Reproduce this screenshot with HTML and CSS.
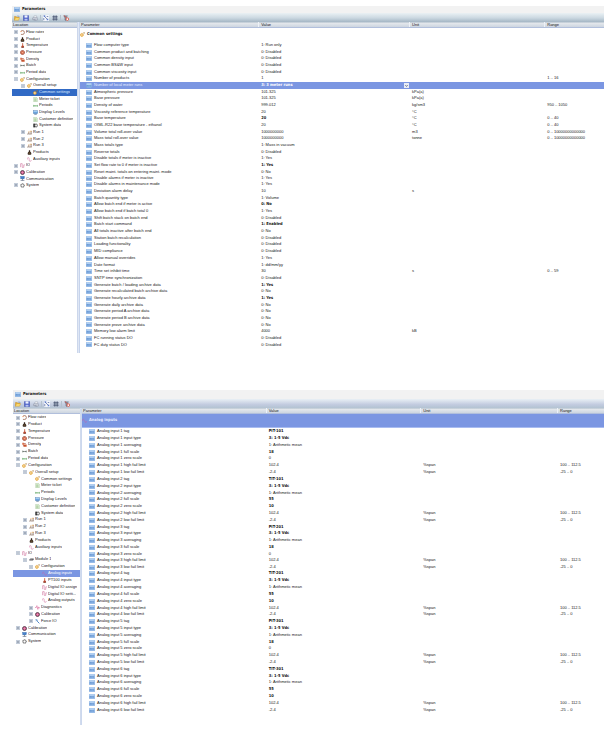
FILE: index.html
```html
<!DOCTYPE html>
<html lang="en">
<head>
<meta charset="utf-8">
<title>Parameters</title>
<link rel="stylesheet" href="styles.css">
</head>
<body>
<svg class="sprite" aria-hidden="true">
  <symbol id="i-param" viewBox="0 0 18 15"><rect x=".7" y=".7" width="16.6" height="13.6" rx="1" fill="#9cc2ee" stroke="#5f93d3" stroke-width="1.4"/><rect x="1.5" y="1.5" width="15" height="3" fill="#c9e0f8"/><path d="M3 11V7h2v4M8 11V7h2v4M12 7h3M12 10h3" stroke="#3f73bb" fill="none" stroke-width="1.2"/></symbol>
  <symbol id="i-open" viewBox="0 0 16 16"><path d="M1 14V4h5l2 2h5v3" fill="#e9b23a" stroke="#b78325"/><path d="M1 14l3-7h11l-3 7z" fill="#fbdc72" stroke="#c79024"/><path d="M9 3q3-2 5 2" fill="none" stroke="#3d6ab5" stroke-width="1.4"/></symbol>
  <symbol id="i-save" viewBox="0 0 16 16"><rect x="1" y="1" width="14" height="14" rx="1" fill="#4a5fc9" stroke="#2e3fa0"/><rect x="4" y="1" width="8" height="6" fill="#eef2ff"/><rect x="4" y="10" width="8" height="5" fill="#b9c4ee"/></symbol>
  <symbol id="i-print" viewBox="0 0 16 16"><path d="M4 7l2-5h6l1 5" fill="#fff" stroke="#8791a5"/><path d="M1 8l4-2h8l2 3v4l-5 2-9-3z" fill="#c4cad6" stroke="#7d8699"/><path d="M4 12l6 1" stroke="#56617a"/></symbol>
  <symbol id="i-tree" viewBox="0 0 16 16"><path fill="#f3f6fb" d="M0 0h16v16H0z"/><path d="M2 2l3 3 3 3 5 5M2 8v6M10 4h4" stroke="#354a8c" stroke-width="1.6" fill="none"/><rect x="2" y="1" width="4" height="4" fill="#5878c9"/><rect x="10" y="10" width="4" height="4" fill="#5878c9"/></symbol>
  <symbol id="i-grid" viewBox="0 0 16 16"><path d="M2 2h12v12H2z" fill="#c4cddd"/><path d="M1 4h14M1 8h14M1 12h14M4 1v14M8 1v14M12 1v14" stroke="#3c4965" stroke-width="1.4"/></symbol>
  <symbol id="i-filter" viewBox="0 0 16 16"><path d="M2 2h10L8 8v7l-3-2V8z" fill="#8e99ab" stroke="#596273"/><path d="M2 1l8 7" stroke="#d6402b" stroke-width="2"/><circle cx="11.500" cy="11" r="3.500" fill="#fff" stroke="#d6402b" stroke-width="2"/></symbol>
  <symbol id="i-flow" viewBox="0 0 16 16"><path d="M4 2h5q5 0 5 6t-5 6H3" fill="none" stroke="#9b6751" stroke-width="2.500"/><path d="M1 5h5" stroke="#e67a35" stroke-width="2"/></symbol>
  <symbol id="i-drop" viewBox="0 0 16 16"><path d="M6 1h4v4q4 3 4 7 0 3-3 3H5q-3 0-3-3 0-4 4-7z" fill="#33241c"/><path d="M5 10h6" stroke="#aa8b4c" stroke-width="2"/></symbol>
  <symbol id="i-temp" viewBox="0 0 16 16"><path d="M7 1h3v7q3 1 3 4 0 3-4.500 3T4 12q0-3 3-4z" fill="#bd4a32"/><path d="M8.500 2v6" stroke="#eec8b6"/><path d="M4 14h9" stroke="#6b3a2b" stroke-width="2"/></symbol>
  <symbol id="i-press" viewBox="0 0 16 16"><circle cx="8" cy="8" r="6.500" fill="#d8694a" stroke="#8d3929" stroke-width="2"/><path d="M4 5l8 6M12 4l-6 7" stroke="#f5cbb5" stroke-width="1.500"/></symbol>
  <symbol id="i-dens" viewBox="0 0 16 16"><path d="M1 2h5v6h9v7H5V9H1z" fill="#d9663d"/><path d="M6 5h6M3 12h9" stroke="#a13c24" stroke-width="2"/></symbol>
  <symbol id="i-batch" viewBox="0 0 16 16"><path d="M1 5v6M15 5v6M2 8h12M5 6v4M11 6v4" stroke="#58605a" stroke-width="1.800"/></symbol>
  <symbol id="i-period" viewBox="0 0 16 16"><path d="M0 9h16M1 6v6M5 7v4M9 7v4M14 6v6" stroke="#62a864" stroke-width="1.800"/></symbol>
  <symbol id="i-gears" viewBox="0 0 16 16"><circle cx="6" cy="9.500" r="4" fill="#fff3cf" stroke="#e09b27" stroke-width="2.600" /><circle cx="6" cy="9.500" r="5.600" fill="none" stroke="#e09b27" stroke-width="1.400" stroke-dasharray="2 2"/><circle cx="13" cy="3" r="1.700" fill="none" stroke="#a77a35" stroke-width="1.600"/></symbol>
  <symbol id="i-ticket" viewBox="0 0 16 16"><path d="M2 1h9l3 3v11H2z" fill="#e6f4df" stroke="#83ac75"/><path d="M4 6h7M4 9h7M4 12h7" stroke="#76ad66" stroke-width="1.400"/></symbol>
  <symbol id="i-display" viewBox="0 0 16 16"><rect x="1" y="2" width="14" height="10" fill="#6ba4df" stroke="#426d9f"/><path d="M2 3h12v3H2z" fill="#a9d1f5"/><path d="M4 14h8" stroke="#46678f" stroke-width="2"/></symbol>
  <symbol id="i-system" viewBox="0 0 16 16"><path d="M1 2h6v12H1z" fill="#292929"/><circle cx="10" cy="8" r="4.500" fill="#fff" stroke="#333" stroke-width="2"/><path d="M10 1v14M3 5h2M3 9h2" stroke="#777"/></symbol>
  <symbol id="i-run" viewBox="0 0 16 16"><path d="M0 13h5V7M6 13h4V5M10 13h5V3" fill="none" stroke="#70503f" stroke-width="1.600"/><path d="M4 6h3M9 4h6" stroke="#e19536" stroke-width="2"/></symbol>
  <symbol id="i-wave" viewBox="0 0 16 16"><path d="M1 8V5q0-3 3-3t3 3v5q0 4 3 4t4-4" fill="none" stroke="#d477a5" stroke-width="1.800"/></symbol>
  <symbol id="i-square" viewBox="0 0 16 16"><path d="M0 12h2V2h5v12h5V6h4" fill="none" stroke="#cf6c9a" stroke-width="1.800"/></symbol>
  <symbol id="i-sine" viewBox="0 0 16 16"><path d="M1 9q3-11 7 0t7 1" fill="none" stroke="#c964a4" stroke-width="1.600"/></symbol>
  <symbol id="i-cal" viewBox="0 0 16 16"><circle cx="8" cy="8" r="6.300" fill="#d75d91" stroke="#453840" stroke-width="2.600"/><path d="M5 8h6M8 5v6" stroke="#f1a6c4" stroke-width="1.500"/></symbol>
  <symbol id="i-comm" viewBox="0 0 16 16"><rect x="2" y="1" width="12" height="8" fill="#3c7cca" stroke="#2d5d9c"/><path d="M8 9v5M2 14h12" stroke="#4b5a75" stroke-width="2"/><path d="M4 3h6" stroke="#9fc7ef"/></symbol>
  <symbol id="i-gear" viewBox="0 0 16 16"><circle cx="8" cy="8" r="4.600" fill="#fff" stroke="#4e4e4e" stroke-width="2"/><circle cx="8" cy="8" r="6.400" fill="none" stroke="#4e4e4e" stroke-width="2" stroke-dasharray="2.500 2.500"/></symbol>
  <symbol id="i-module" viewBox="0 0 16 16"><path d="M1 8l4-3h10v4l-3 2H1z" fill="#56565a"/><path d="M2 8h9" stroke="#c7c7ca"/></symbol>
  <symbol id="i-diag" viewBox="0 0 16 16"><path d="M0 8h4l2-6 3 12 2-8 1 3h4" fill="none" stroke="#dc6f9e" stroke-width="2"/></symbol>
  <symbol id="i-force" viewBox="0 0 16 16"><path d="M2 2l4 1 1 4 7 7" fill="none" stroke="#447fc1" stroke-width="3"/><path d="M2 7l5-5" stroke="#78a9db" stroke-width="2"/></symbol>
</svg>

<main>
  <section class="panel common" id="common" aria-label="Common settings parameters"></section>
  <section class="panel analog" id="analog" aria-label="Analog input parameters"></section>
</main>
<script src="app.js"></script>
</body>
</html>
```
FILE: styles.css
```css
* { box-sizing: border-box; }

body {
  margin: 0;
  background: #fff;
  color: #161616;
  font: 4px "Liberation Sans", Arial, sans-serif;
}

button, select {
  margin: 0;
  padding: 0;
  border: 0;
  background: none;
  color: inherit;
  font: inherit;
  line-height: inherit;
}

.sprite { position: absolute; width: 0; height: 0; }

main {
  display: flex;
  flex-direction: column;
  gap: 37px;
  padding: 6px 0 23px 12px;
}

.panel { line-height: 1.67; }
.analog { line-height: 1.705; margin-left: 1px; }

.icon { flex: none; width: 5px; height: 5px; }
.icon.param { width: 6px; }

.titlebar {
  display: flex;
  align-items: center;
  gap: 2px;
  height: 7px;
  margin: 0;
  padding-left: 2px;
  background: #f2f2f2;
}
.analog .titlebar { height: 9px; }

.titlebar, .bold, .section, .editor {
  font-family: "DejaVu Sans Condensed", "DejaVu Sans", sans-serif;
  font-size: 4px;
  font-weight: bold;
}

.toolbar {
  display: flex;
  align-items: center;
  gap: 3px;
  height: 9px;
  padding-left: 2px;
  background: linear-gradient(#eaf1f4, #cbd8e1 55%, #a4b6c4);
}
.analog .toolbar { background: linear-gradient(#e9f0f5, #c3cce0 60%, #b3c3d2); }
.toolbar button { display: flex; }
.toolbar .icon { width: 6px; height: 6px; }
.toolbar .rule { width: 1px; height: 6px; margin: 0 -1px; background: #b4c1cd; }

.split {
  display: grid;
  grid-template-columns: 65px 3px 1fr;
}
.analog .split { grid-template-columns: 67px 2px 1fr; }

.head {
  height: 6px;
  border-bottom: 1px solid #b1bfdc;
  background: linear-gradient(#b9c6d1, #e2e6eb 30%, #ccd5e0);
  line-height: 5px;
}
.location { padding-left: 1px; }
.bar { background: linear-gradient(90deg, #c3cfe6, #dfe7f5 50%, #b9c9e6); }

.tree, .tree ul { margin: 0; padding: 0; list-style: none; }
.tree { padding-top: 1px; overflow: hidden; }
.analog .tree { padding-top: 0; }

.node {
  display: flex;
  align-items: center;
  gap: 2px;
  padding-left: 2px;
  white-space: nowrap;
}
.node .label { overflow: hidden; text-overflow: ellipsis; margin-left: -1px; }
.tree ul .node { padding-left: 9px; }
.tree ul ul .node { padding-left: 15px; }
.analog .node { padding-left: 3px; }
.analog .tree ul .node { padding-left: 10px; }
.analog .tree ul ul .node { padding-left: 16px; }
.analog .tree ul ul ul .node { padding-left: 23px; }

.expander, .blank { flex: none; width: 4px; height: 4px; }
.expander {
  display: flex;
  border: 1px solid #c3ccd9;
  background: #e9eef5;
}
.expander svg { width: 4px; height: 4px; margin: -1px; flex: none; }
.common .node.selected { background: #316ac5; color: #dce9ff; }
.analog .node.selected { background: #7b96e2; color: #fff; }

table, thead, tbody { display: block; }
tr {
  display: grid;
  grid-template-columns: 340fr 288fr 258fr 114fr;
}
.analog tr { grid-template-columns: 352fr 296fr 262fr 90fr; }
th, td { padding: 0 0 0 3px; text-align: left; font-weight: normal; white-space: nowrap; }
th:first-child { padding-left: 1px; }
th + th { border-left: 1px solid #eef2f7; padding-left: 2px; }
td:first-child { display: flex; align-items: center; gap: 2px; padding-left: 6px; }
.analog td:first-child { padding-left: 7px; }
td.bold { font-weight: bold; }
tr.selected { background: #7b96e2; color: #e7edff; }
tr.section { display: block; height: 14px; }
.panel tr.section td {
  display: flex;
  align-items: center;
  gap: 2px;
  height: 13px;
  padding-left: 0;
  font-weight: bold;
}
.analog tr.section { border-bottom: 1px solid #a9bcf0; }

.seam { height: 6px; }
.common .seam .label { height: 4px; overflow: hidden; align-self: flex-start; }
.common td.seam-value { height: 4px; overflow: hidden; }

.editing { display: flex; }
.editor { flex: 1; min-width: 0; height: 6px; appearance: none; color: #fff; line-height: 6px; }
.drop { flex: none; width: 5px; height: 5px; margin: 1px 0 0; align-self: flex-start; }

.params { padding-bottom: 5px; }
.analog .params { padding-bottom: 11px; }
```
FILE: app.js
```js
const icon = (name, cls = '') => `<svg class="icon ${cls}" aria-hidden="true"><use href="#i-${name}"/></svg>`;

// Tree nodes: [label, icon, state, children]; state is '+', '-' or ''.
const measured = [
  ['Flow rates', 'flow', '+'], ['Product', 'drop', '+'], ['Temperature', 'temp', '+'],
  ['Pressure', 'press', '+'], ['Density', 'dens', '+'], ['Batch', 'batch', '+'], ['Period data', 'period', '+']
];
const setup = ['Overall setup', 'gears', '-', [
  ['Common settings', 'gears', ''], ['Meter ticket', 'ticket', ''], ['Periods', 'period', ''],
  ['Display Levels', 'display', ''], ['Customer definition', 'ticket', ''], ['System data', 'system', '']
]];
const configuration = ['Configuration', 'gears', '-', [
  setup, ['Run 1', 'run', '+'], ['Run 2', 'run', '+'], ['Run 3', 'run', '+'],
  ['Products', 'drop', ''], ['Auxiliary inputs', 'wave', '']
]];
const tail = [['Calibration', 'cal', '+'], ['Communication', 'comm', ''], ['System', 'gear', '+']];
const io = ['IO', 'square', '-', [
  ['Module 1', 'module', '-', [
    ['Configuration', 'gears', '-', [
      ['Analog inputs', 'sine', ''], ['PT100 inputs', 'temp', ''], ['Digital IO assign', 'square', ''],
      ['Digital IO setti...', 'square', ''], ['Analog outputs', 'wave', '']
    ]],
    ['Diagnostics', 'diag', '+'], ['Calibration', 'cal', '+'], ['Force IO', 'force', '+']
  ]]
]];

function treeItems(nodes, selected, seam) {
  return nodes.map(([label, name, state, children]) => {
    const toggle = state
      ? `<button class="expander" type="button" aria-label="Toggle ${label}"><svg viewBox="0 0 8 8"><path d="M2 4h4${state === '+' ? 'M4 2v4' : ''}" stroke="#44546c"/></svg></button>`
      : '<span class="blank"></span>';
    const cls = (label === selected ? ' selected' : '') + (label === seam ? ' seam' : '');
    return `<li><div class="node${cls}">${toggle}${icon(name)}<span class="label">${label}</span></div>` +
      (children ? `<ul>${treeItems(children, selected, seam)}</ul>` : '') + '</li>';
  }).join('');
}

// Rows: name | value | unit | range; a leading * marks a changed value.
const commonRows = `Flow computer type|1: Run only
Common product and batching|0: Disabled
Common density input|0: Disabled
Common BS&amp;W input|0: Disabled
Common viscosity input|0: Disabled
Number of products|1||1 .. 16
Number of local meter runs|3: 3 meter runs
Atmospheric pressure|101.325|kPa(a)
Base pressure|101.325|kPa(a)
Density of water|999.012|kg/sm3|950 .. 1050
Viscosity reference temperature|20|°C
Base temperature|*20|°C|0 .. 40
OIML-R22 base temperature - ethanol|20|°C|0 .. 40
Volume total roll-over value|1000000000|m3|0 .. 10000000000000
Mass total roll-over value|1000000000|tonne|0 .. 10000000000000
Mass totals type|1: Mass in vacuum
Reverse totals|0: Disabled
Disable totals if meter is inactive|1: Yes
Set flow rate to 0 if meter is inactive|*1: Yes
Reset maint. totals on entering maint. mode|0: No
Disable alarms if meter is inactive|1: Yes
Disable alarms in maintenance mode|1: Yes
Deviation alarm delay|10|s
Batch quantity type|1: Volume
Allow batch end if meter is active|*0: No
Allow batch end if batch total 0|1: Yes
Shift batch stack on batch end|0: Disabled
Batch start command|*1: Enabled
All totals inactive after batch end|0: No
Station batch recalculation|0: Disabled
Loading functionality|0: Disabled
MID compliance|0: Disabled
Allow manual overrides|1: Yes
Date format|1: dd/mm/yy
Time set inhibit time|30|s|0 .. 59
SNTP time synchronization|0: Disabled
Generate batch / loading archive data|*1: Yes
Generate recalculated batch archive data|0: No
Generate hourly archive data|*1: Yes
Generate daily archive data|0: No
Generate period A archive data|0: No
Generate period B archive data|0: No
Generate prove archive data|0: No
Memory low alarm limit|4000|kB
FC running status DO|0: Disabled
FC duty status DO|0: Disabled`.split('\n').map(line => line.split('|'));

const tags = ['PIT-101', 'TIT-101', 'PIT-201', 'TIT-201', 'PIT-301', 'TIT-301'];
const analogRows = tags.flatMap((tag, i) => {
  const name = `Analog input ${i + 1} `;
  const temperature = i % 2 === 1;
  return [
    [name + 'tag', '*' + tag],
    [name + 'input type', '*3: 1-5 Vdc'],
    [name + 'averaging', '1: Arithmetic mean'],
    [name + 'full scale', temperature ? '*55' : '*18'],
    [name + 'zero scale', temperature ? '*10' : '0'],
    [name + 'high fail limit', '102.4', '%span', '100 .. 112.5'],
    [name + 'low fail limit', '-2.4', '%span', '-25 .. 0']
  ];
});

function tableRow([name, value, unit = '', range = ''], selected, seam) {
  const bold = value.startsWith('*');
  const text = value.replace('*', '');
  const isSelected = name === selected;
  const isSeam = name === seam;
  const cell = isSelected
    ? `<td class="editing"><select class="editor" aria-label="${name}"><option>${text}</option></select><svg class="drop" viewBox="0 0 10 10" aria-hidden="true"><rect width="10" height="10" fill="#e9edf5"/><path d="M2.500 4L5 7l2.500-3" fill="none" stroke="#5b6680" stroke-width="1.500"/></svg></td>`
    : `<td class="${bold ? 'bold' : ''}${isSeam ? ' seam-value' : ''}">${text}</td>`;
  return `<tr class="${isSelected ? 'selected' : ''}${isSeam ? ' seam' : ''}"><td>${icon('param', 'param')}<span class="label">${name}</span></td>${cell}<td>${unit}</td><td>${range}</td></tr>`;
}

function renderPanel(id, o) {
  const rule = '<span class="rule"></span>';
  const tool = (name, label) => `<button type="button" aria-label="${label}">${icon(name)}</button>`;
  document.getElementById(id).innerHTML = `
    <h1 class="titlebar">${icon('param', 'param')}Parameters</h1>
    <div class="toolbar">${tool('open', 'Open')}${tool('save', 'Save')}${tool('print', 'Print')}${rule}${tool('tree', 'Tree')}${tool('grid', 'Grid')}${rule}${tool('filter', 'Clear filter')}</div>
    <div class="split">
      <nav><div class="head location">Location</div><ul class="tree">${treeItems(o.tree, o.node, o.treeSeam)}</ul></nav>
      <div class="bar"></div>
      <table class="params">
        <thead><tr class="head"><th>Parameter</th><th>Value</th><th>Unit</th><th>Range</th></tr></thead>
        <tbody><tr class="section${o.sectionSelected ? ' selected' : ''}"><td>${icon(o.sectionIcon)}${o.section}</td></tr>
        ${o.rows.map(row => tableRow(row, o.row, o.rowSeam)).join('')}</tbody>
      </table>
    </div>`;
}

renderPanel('common', {
  tree: [...measured, configuration, ['IO', 'square', '+'], ...tail],
  node: 'Common settings', treeSeam: 'Communication',
  section: 'Common settings', sectionIcon: 'gears',
  rows: commonRows, row: 'Number of local meter runs', rowSeam: 'Disable alarms if meter is inactive'
});
renderPanel('analog', {
  tree: [...measured, configuration, io, ...tail],
  node: 'Analog inputs', treeSeam: 'IO',
  section: 'Analog inputs', sectionIcon: 'sine', sectionSelected: true,
  rows: analogRows, rowSeam: 'Analog input 3 zero scale'
});
```
